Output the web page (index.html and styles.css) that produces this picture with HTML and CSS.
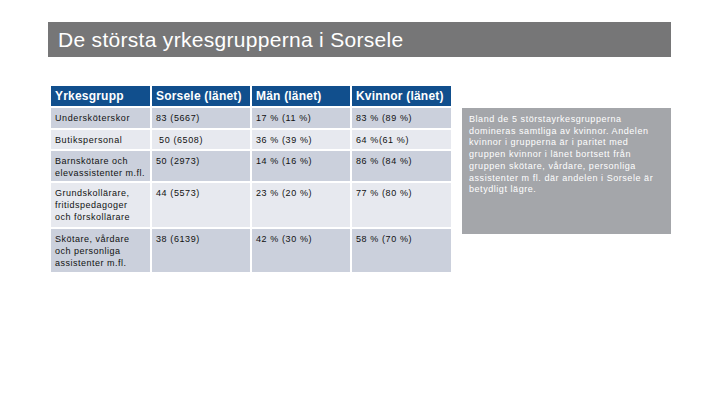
FILE: index.html
```html
<!DOCTYPE html>
<html lang="sv">
<head>
<meta charset="utf-8">
<title>De största yrkesgrupperna i Sorsele</title>
<link rel="stylesheet" href="styles.css">
</head>
<body>
<div class="slide">
  <h1 class="title">De största yrkesgrupperna i Sorsele</h1>
  <div class="content">
    <div class="table">
      <div class="cell head">Yrkesgrupp</div>
      <div class="cell head">Sorsele (länet)</div>
      <div class="cell head">Män (länet)</div>
      <div class="cell head">Kvinnor (länet)</div>

      <div class="cell dark">Undersköterskor</div>
      <div class="cell dark">83 (5667)</div>
      <div class="cell dark">17 % (11 %)</div>
      <div class="cell dark">83 % (89 %)</div>

      <div class="cell light">Butikspersonal</div>
      <div class="cell light">&nbsp;50 (6508)</div>
      <div class="cell light">36 % (39 %)</div>
      <div class="cell light">64 %(61 %)</div>

      <div class="cell dark group">Barnskötare och<br>elevassistenter m.fl.</div>
      <div class="cell dark">50 (2973)</div>
      <div class="cell dark">14 % (16 %)</div>
      <div class="cell dark">86 % (84 %)</div>

      <div class="cell light group">Grundskollärare,<br>fritidspedagoger<br>och förskollärare</div>
      <div class="cell light">44 (5573)</div>
      <div class="cell light">23 % (20 %)</div>
      <div class="cell light">77 % (80 %)</div>

      <div class="cell dark group">Skötare, vårdare<br>och personliga<br>assistenter m.fl.</div>
      <div class="cell dark">38 (6139)</div>
      <div class="cell dark">42 % (30 %)</div>
      <div class="cell dark">58 % (70 %)</div>
    </div>
    <div class="note">Bland de 5 störstayrkesgrupperna<br>domineras samtliga av kvinnor. Andelen<br>kvinnor i grupperna är i paritet med<br>gruppen kvinnor i länet bortsett från<br>gruppen skötare, vårdare, personliga<br>assistenter m fl. där andelen i Sorsele är<br>betydligt lägre.</div>
  </div>
</div>
</body>
</html>
```

FILE: styles.css
```css
html, body {
  margin: 0;
  padding: 0;
  background: #ffffff;
}
body {
  font-family: "Liberation Sans", Arial, sans-serif;
  width: 720px;
  height: 405px;
  overflow: hidden;
}
.slide {
  padding: 22px 0 0 48px;
}
.title {
  margin: 0;
  width: 623px;
  height: 35px;
  box-sizing: border-box;
  background: #767677;
  color: #ffffff;
  font-weight: normal;
  font-size: 21px;
  line-height: 35px;
  padding-left: 10px;
  letter-spacing: 0.3px;
}
.content {
  display: flex;
  align-items: flex-start;
  margin-top: 29px;
  padding-left: 3px;
}
.table {
  display: grid;
  grid-template-columns: 99px 98px 98px 99px;
  grid-template-rows: 20px 20px 19px 30px 44px 43px;
  gap: 2px;
  width: 400px;
}
.cell {
  box-sizing: border-box;
  padding: 4px 0 0 4px;
  font-size: 9px;
  line-height: 12px;
  color: #111111;
  letter-spacing: 0.6px;
  white-space: nowrap;
}
.group {
  letter-spacing: 0.5px;
}
.head {
  background: #114f8d;
  color: #ffffff;
  font-weight: bold;
  font-size: 12px;
  line-height: 20px;
  padding-top: 0;
  letter-spacing: 0.2px;
}
.dark {
  background: #cbd0dc;
}
.light {
  background: #e7e9ef;
}
.note {
  margin-left: 11px;
  margin-top: 22px;
  width: 209px;
  height: 126px;
  box-sizing: border-box;
  background: #a4a6aa;
  color: #ffffff;
  font-size: 9px;
  line-height: 11.7px;
  padding: 6px 2px 0 7px;
  letter-spacing: 0.55px;
  white-space: nowrap;
}
```
